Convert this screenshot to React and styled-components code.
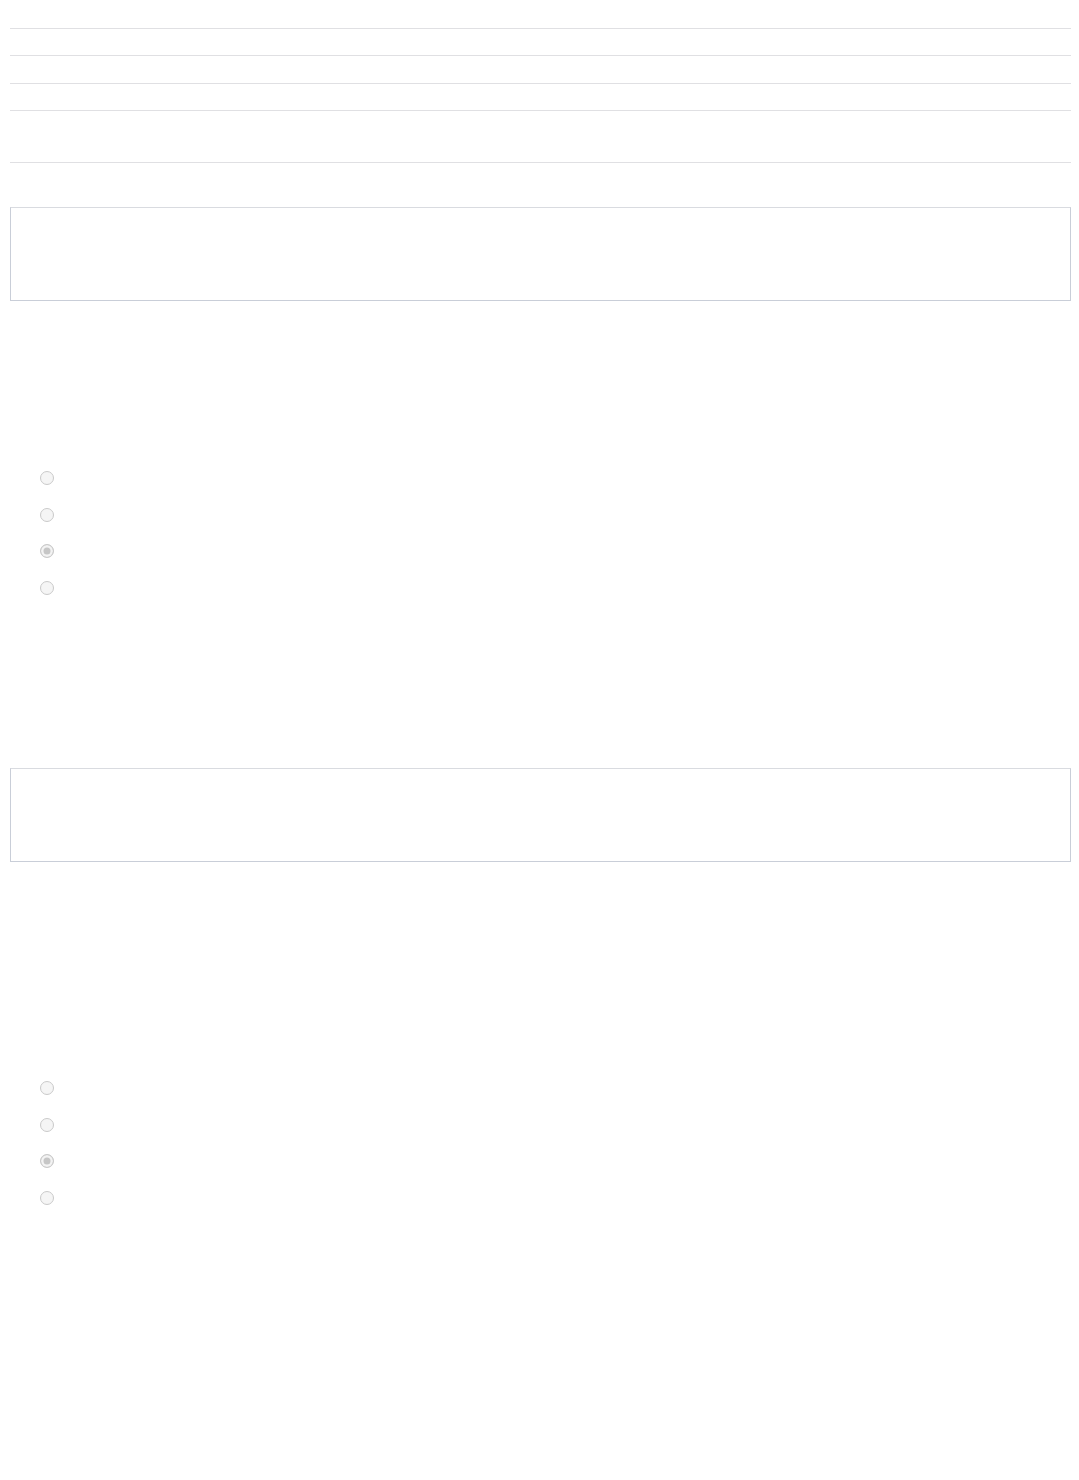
import styled, { createGlobalStyle } from 'styled-components'

const GlobalStyle = createGlobalStyle`
  body {
    margin: 0;
    background: #ffffff;
    font-family: "Liberation Sans", Arial, sans-serif;
    color: #ffffff;
  }
`

const Page = styled.div`
  padding: 0 8px 0 10px;
  min-height: 1480px;
  box-sizing: border-box;
`

const List = styled.div`
  display: flex;
  flex-direction: column;
`

const Row = styled.div`
  height: ${(p) => p.h}px;
  border-bottom: 1px solid #e0e0e3;
`

const Field = styled.div`
  height: 92px;
  margin-top: ${(p) => p.top}px;
  border: 1px solid #c9ced8;
  border-top-color: #d9dbe0;
  background: #fff;
`

const Options = styled.div`
  display: flex;
  flex-direction: column;
  gap: 22.7px;
  padding-left: 30px;
  margin-top: ${(p) => p.top}px;
`

const Radio = styled.span`
  width: 14px;
  height: 14px;
  box-sizing: border-box;
  border-radius: 50%;
  border: 1px solid #cacaca;
  background: ${(p) => (p.checked ? '#c6c6c6' : '#f5f5f5')};
  box-shadow: ${(p) => (p.checked ? 'inset 0 0 0 2.5px #f3f3f3' : 'none')};
  display: block;
`

const rows = [28, 26, 27, 26, 51]
const choices = [false, false, true, false]

function Question({ fieldTop, optionsTop }) {
  return (
    <>
      <Field top={fieldTop} />
      <Options top={optionsTop}>
        {choices.map((c, i) => (
          <Radio key={i} checked={c} />
        ))}
      </Options>
    </>
  )
}

export default function App() {
  return (
    <Page>
      <GlobalStyle />
      <List>
        {rows.map((h, i) => (
          <Row key={i} h={h} />
        ))}
      </List>
      <Question fieldTop={44} optionsTop={170} />
      <Question fieldTop={173} optionsTop={219} />
    </Page>
  )
}
